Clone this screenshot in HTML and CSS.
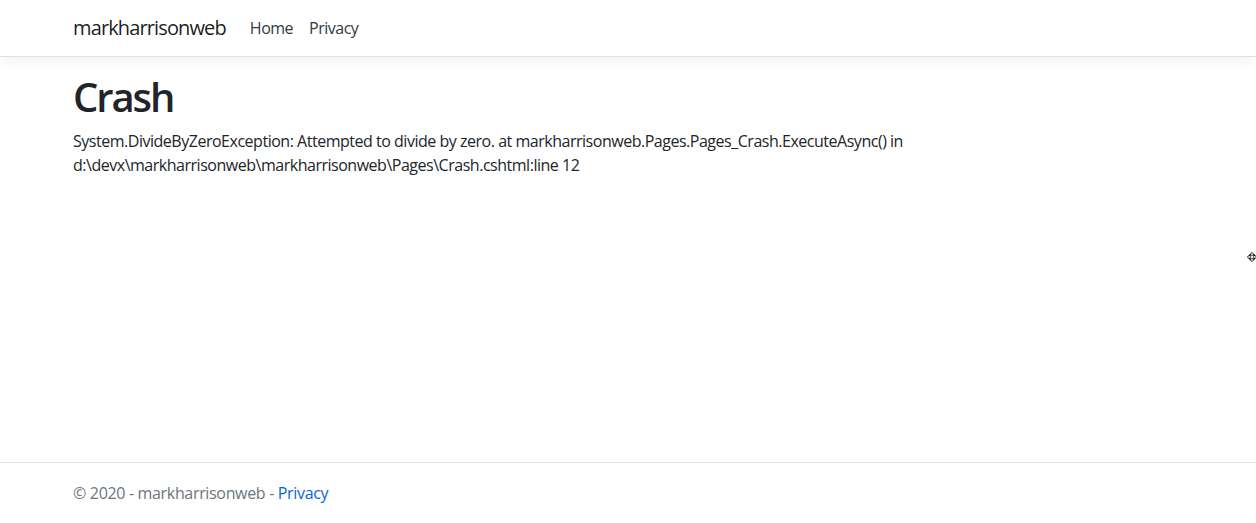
FILE: index.html
```html
<!DOCTYPE html>
<html lang="en">
<head>
<meta charset="utf-8">
<title>Crash - markharrisonweb</title>
<link rel="stylesheet" href="styles.css">
</head>
<body>
<div class="page">
  <header class="navbar">
    <div class="container nav-inner">
      <a class="brand" href="#">markharrisonweb</a>
      <ul class="nav-links">
        <li><a href="#">Home</a></li>
        <li><a href="#">Privacy</a></li>
      </ul>
    </div>
  </header>
  <main class="container main">
    <h1 class="title">Crash</h1>
    <p class="message">System.DivideByZeroException: Attempted to divide by zero. at markharrisonweb.Pages.Pages_Crash.ExecuteAsync() in d:\devx\markharrisonweb\markharrisonweb\Pages\Crash.cshtml:line 12</p>
  </main>
  <footer class="footer">
    <div class="container">&copy; 2020 - markharrisonweb - <a href="#" class="footer-link">Privacy</a></div>
  </footer>
  <svg class="cursor" width="10" height="10" viewBox="0 0 11 11" aria-hidden="true">
    <path d="M5.5 0.5 L8 3 L6.5 3 L6.5 4.5 L8 4.5 L8 3 L10.5 5.5 L8 8 L8 6.5 L6.5 6.5 L6.5 8 L8 8 L5.5 10.5 L3 8 L4.5 8 L4.5 6.5 L3 6.5 L3 8 L0.5 5.5 L3 3 L3 4.5 L4.5 4.5 L4.5 3 L3 3 Z" fill="#fff" stroke="#000" stroke-width="1"/>
  </svg>
</div>
</body>
</html>
```

FILE: styles.css
```css
* { box-sizing: border-box; }
html, body { margin: 0; padding: 0; }
body {
  font-family: "Open Sans", "Noto Sans", sans-serif;
  font-size: 16px;
  line-height: 1.5;
  color: #212529;
  background: #fff;
}
.page {
  min-height: 100vh;
  display: flex;
  flex-direction: column;
  position: relative;
}
.container {
  width: 100%;
  max-width: 1140px;
  padding: 0 15px;
  margin: 0 auto;
}
.navbar {
  background: #fff;
  border-bottom: 1px solid #dee2e6;
  box-shadow: 0 4px 12px rgba(0,0,0,.05);
  padding: 8px 0;
  margin-bottom: 16px;
}
.nav-inner {
  display: flex;
  align-items: center;
}
.brand {
  font-size: 20px;
  line-height: 30px;
  padding: 5px 0;
  margin-right: 16px;
  color: rgba(0,0,0,.9);
  text-decoration: none;
  letter-spacing: -0.87px;
}
.nav-links {
  list-style: none;
  display: flex;
  margin: 0;
  padding: 0;
}
.nav-links a {
  display: block;
  padding: 8px;
  color: #343a40;
  text-decoration: none;
  letter-spacing: -0.5px;
}
.main {
  flex: 1;
  padding-bottom: 16px;
}
.title {
  font-size: 40px;
  font-weight: 600;
  line-height: 1.2;
  margin: 0 0 8px;
  letter-spacing: -2.1px;
}
.message {
  margin: 0 0 16px;
  max-width: 1110px;
  letter-spacing: -0.48px;
}
.footer {
  border-top: 1px solid #dee2e6;
  line-height: 60px;
  white-space: nowrap;
  color: #6c757d;
  letter-spacing: -0.33px;
}
.footer-link {
  color: #0366d6;
  text-decoration: none;
}
.cursor {
  position: absolute;
  left: 1247px;
  top: 252px;
}
```
